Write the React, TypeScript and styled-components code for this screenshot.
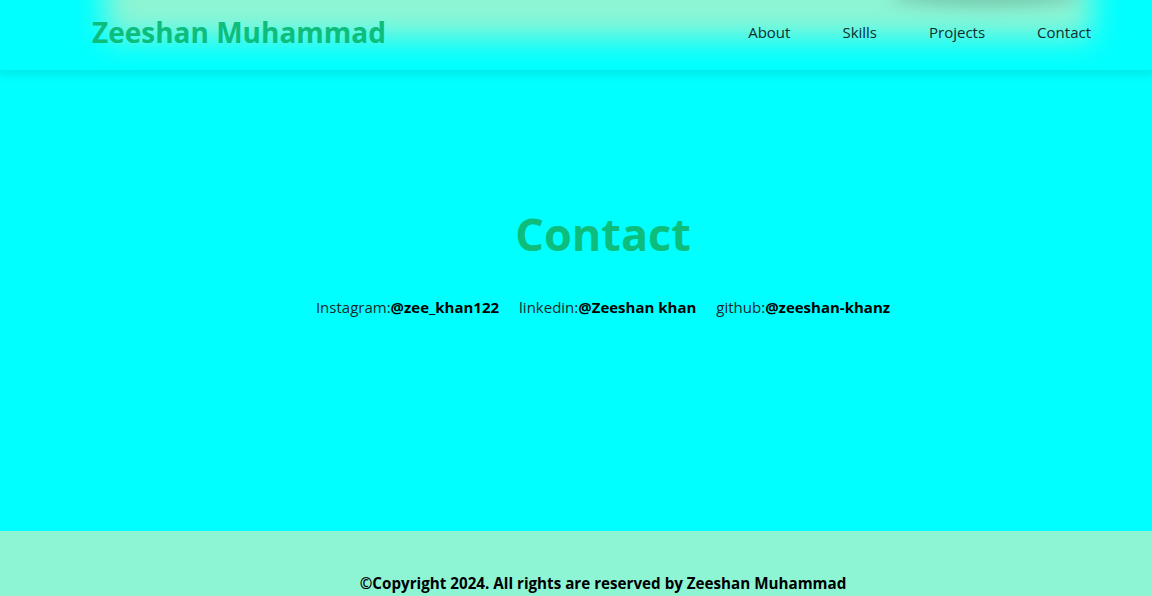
import React from "react";
import styled, { createGlobalStyle } from "styled-components";

const Global = createGlobalStyle`
  html, body { margin: 0; padding: 0; }
  body {
    font-family: "Open Sans", "Noto Sans", "DejaVu Sans", sans-serif;
    background: #00ffff;
    color: #111;
  }
  * { box-sizing: border-box; }
`;

const Header = styled.header`
  position: relative;
  height: 70px;
  background: #00ffff;
  overflow: hidden;
  display: flex;
  align-items: center;
  justify-content: space-between;
  padding: 0 61px 6px 92px;
  z-index: 2;
`;

const HeaderShadow = styled.div`
  height: 0;
  box-shadow: 0 0 10px 3px rgba(0, 150, 150, 0.35);
  position: relative;
  z-index: 1;
`;

const BlurSheet = styled.div`
  position: absolute;
  left: 105px;
  right: 60px;
  top: -40px;
  height: 78px;
  background: #8ef5d4;
  filter: blur(15px);
  z-index: 0;
`;

const BlurBlob = styled.div`
  position: absolute;
  left: 890px;
  width: 190px;
  top: -14px;
  height: 20px;
  border-radius: 50%;
  background: rgba(80, 130, 110, 0.4);
  filter: blur(8px);
  z-index: 0;
`;

const Logo = styled.h1`
  position: relative;
  z-index: 1;
  margin: 0;
  font-size: 28px;
  font-weight: 700;
  color: #0dbd7c;
`;

const Nav = styled.nav`
  position: relative;
  z-index: 1;
  display: flex;
  gap: 52px;
`;

const NavLink = styled.a`
  font-size: 15px;
  color: #0b2f2f;
  text-decoration: none;
`;

const Main = styled.main`
  height: 461px;
  background: #00ffff;
  display: flex;
  flex-direction: column;
  align-items: center;
  padding: 134px 0 0 54px;
`;

const Title = styled.h2`
  margin: 0;
  font-size: 45px;
  font-weight: 700;
  color: #0dbd7c;
  line-height: 60px;
`;

const Links = styled.div`
  margin-top: 33px;
  display: flex;
  gap: 20px;
  font-size: 15px;
`;

const LinkItem = styled.span`
  color: #1a2a2a;
  font-weight: 400;
`;

const Handle = styled.b`
  color: #000;
  font-weight: 700;
`;

const Footer = styled.footer`
  background: #8ef5d4;
  height: 130px;
  display: flex;
  justify-content: center;
  padding: 42px 0 0 54px;
`;

const Copy = styled.p`
  margin: 0;
  font-size: 15.2px;
  font-weight: 700;
  color: #000;
`;

export default function App() {
  return (
    <>
      <Global />
      <Header>
        <BlurSheet />
        <BlurBlob />
        <Logo>Zeeshan Muhammad</Logo>
        <Nav>
          <NavLink href="#about">About</NavLink>
          <NavLink href="#skills">Skills</NavLink>
          <NavLink href="#projects">Projects</NavLink>
          <NavLink href="#contact">Contact</NavLink>
        </Nav>
      </Header>
      <HeaderShadow />
      <Main id="contact">
        <Title>Contact</Title>
        <Links>
          <LinkItem>
            Instagram:<Handle>@zee_khan122</Handle>
          </LinkItem>
          <LinkItem>
            linkedin:<Handle>@Zeeshan khan</Handle>
          </LinkItem>
          <LinkItem>
            github:<Handle>@zeeshan-khanz</Handle>
          </LinkItem>
        </Links>
      </Main>
      <Footer>
        <Copy>©Copyright 2024. All rights are reserved by Zeeshan Muhammad</Copy>
      </Footer>
    </>
  );
}
